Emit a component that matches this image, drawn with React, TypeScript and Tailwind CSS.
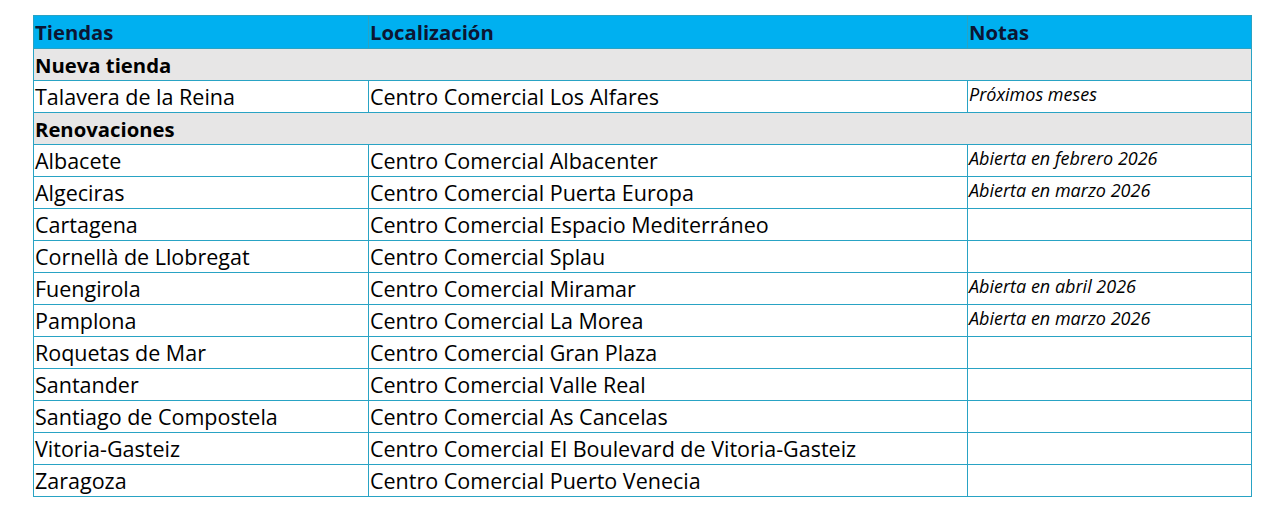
const rows: { group?: string; tienda?: string; loc?: string; nota?: string }[] = [
  { group: "Nueva tienda" },
  { tienda: "Talavera de la Reina", loc: "Centro Comercial Los Alfares", nota: "Próximos meses" },
  { group: "Renovaciones" },
  { tienda: "Albacete", loc: "Centro Comercial Albacenter", nota: "Abierta en febrero 2026" },
  { tienda: "Algeciras", loc: "Centro Comercial Puerta Europa", nota: "Abierta en marzo 2026" },
  { tienda: "Cartagena", loc: "Centro Comercial Espacio Mediterráneo" },
  { tienda: "Cornellà de Llobregat", loc: "Centro Comercial Splau" },
  { tienda: "Fuengirola", loc: "Centro Comercial Miramar", nota: "Abierta en abril 2026" },
  { tienda: "Pamplona", loc: "Centro Comercial La Morea", nota: "Abierta en marzo 2026" },
  { tienda: "Roquetas de Mar", loc: "Centro Comercial Gran Plaza" },
  { tienda: "Santander", loc: "Centro Comercial Valle Real" },
  { tienda: "Santiago de Compostela", loc: "Centro Comercial As Cancelas" },
  { tienda: "Vitoria-Gasteiz", loc: "Centro Comercial El Boulevard de Vitoria-Gasteiz" },
  { tienda: "Zaragoza", loc: "Centro Comercial Puerto Venecia" },
];

function App() {
  return (
    <div className="bg-white w-[1280px] h-[518px] pt-[15px] pl-[33px] font-['Open_Sans',sans-serif] text-black">
      <table className="border-collapse table-fixed w-[1218px]">
        <colgroup>
          <col className="w-[335px]" />
          <col className="w-[599px]" />
          <col className="w-[284px]" />
        </colgroup>
        <thead>
          <tr className="h-[33px] bg-[#00b0f0] text-[#0c1633] text-[20.3px] leading-[28px] font-bold">
            <th className="text-left font-bold px-[1px] border border-[#29a3c4]">Tiendas</th>
            <th className="text-left font-bold px-[1px] border-y border-[#29a3c4]">Localización</th>
            <th className="text-left font-bold px-[1px] border border-[#29a3c4]">Notas</th>
          </tr>
        </thead>
        <tbody>
          {rows.map((r, i) =>
            r.group ? (
              <tr key={i} className="h-[32px] bg-[#e7e6e6]">
                <td colSpan={3} className="px-[1px] text-[20.3px] leading-[28px] font-bold border border-[#29a3c4]">
                  {r.group}
                </td>
              </tr>
            ) : (
              <tr key={i} className="h-[32px] bg-white">
                <td className="px-[1px] text-[21.5px] leading-[28px] border border-[#29a3c4] whitespace-nowrap">{r.tienda}</td>
                <td className="px-[1px] text-[21.5px] leading-[28px] border border-[#29a3c4] whitespace-nowrap">{r.loc}</td>
                <td className="px-[1px] align-top text-[18px] italic leading-[26px] border border-[#29a3c4] whitespace-nowrap">
                  {r.nota}
                </td>
              </tr>
            )
          )}
        </tbody>
      </table>
    </div>
  );
}

export default App;
